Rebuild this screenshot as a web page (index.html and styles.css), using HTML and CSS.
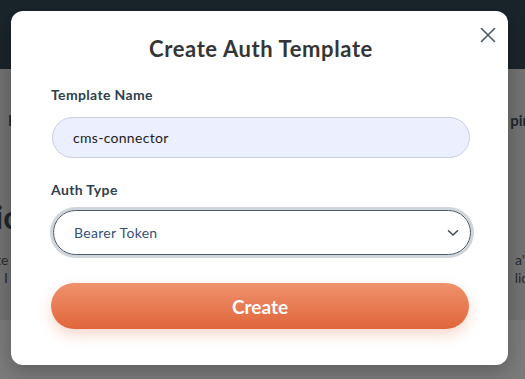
FILE: index.html
```html
<!DOCTYPE html>
<html>
<head>
<meta charset="utf-8">
<link rel="stylesheet" href="styles.css">
</head>
<body>
<div class="page">
  <header class="topbar"></header>
  <main class="content">
    <div class="row row-a"><span class="bg-strong">I</span><span class="bg-strong">pin</span></div>
    <div class="row row-h"><span class="bg-heading">ic</span><span></span></div>
    <div class="row row-p"><span>te</span><span>a"</span></div>
    <div class="row row-p2"><span>. I</span><span>lic</span></div>
  </main>
  <footer class="lower"></footer>
</div>

<div class="modal" role="dialog">
  <button class="close" aria-label="Close">
    <svg width="16" height="16" viewBox="0 0 16 16"><path d="M1.5 1.5 L14.5 14.5 M14.5 1.5 L1.5 14.5" stroke="#4b5a66" stroke-width="1.6" stroke-linecap="round" fill="none"/></svg>
  </button>
  <h2 class="title">Create Auth Template</h2>
  <label class="label">Template Name</label>
  <div class="input">cms-connector</div>
  <label class="label label-2">Auth Type</label>
  <div class="select">
    <span>Bearer Token</span>
    <svg width="12" height="8" viewBox="0 0 12 8"><path d="M1.5 1.8 L6 6 L10.5 1.8" stroke="#3e4a55" stroke-width="1.5" fill="none" stroke-linecap="round" stroke-linejoin="round"/></svg>
  </div>
  <button class="create">Create</button>
</div>
</body>
</html>
```
FILE: styles.css
```css
* { box-sizing: border-box; }
html, body { margin: 0; padding: 0; }
body {
  width: 525px; height: 379px; overflow: hidden;
  font-family: "Lato", "Noto Sans", sans-serif;
  background: #7b7b7b;
  position: relative;
}
.page { display: flex; flex-direction: column; height: 379px; }
.topbar { height: 69px; background: #1a242b; }
.content {
  height: 251px; background: #727272;
  display: flex; flex-direction: column;
  color: #1f262c;
}
.row { display: flex; justify-content: space-between; }
.row-a { margin-top: 42px; font-size: 15px; font-weight: 700; line-height: 18px; padding: 0 0 0 8px; margin-right: -6px; }
.row-h { margin-top: 70px; font-size: 32px; font-weight: 700; line-height: 36px; margin-left: -5px; }
.row-p { margin-top: 16px; font-size: 14px; line-height: 18px; color: #2a2a2a; margin-left: -4px; margin-right: -2px; }
.row-p2 { font-size: 14px; line-height: 18px; color: #2a2a2a; margin-left: -3px; margin-right: -3px; }
.lower { flex: 1; background: #7b7b7b; }

.modal {
  position: absolute; left: 11px; top: 11px;
  width: 497px; height: 354px;
  background: #fff; border-radius: 12px;
  box-shadow: 0 6px 20px rgba(0,0,0,0.25);
  padding: 26px 37px 0 40px;
  display: flex; flex-direction: column;
}
.close {
  position: absolute; right: 11px; top: 15px;
  width: 18px; height: 18px; padding: 0; border: 0; background: none;
  display: flex; align-items: center; justify-content: center;
}
.title {
  margin: 0; text-align: center;
  font-size: 22px; line-height: 24px; font-weight: 700;
  color: #353535; letter-spacing: 0.6px;
  padding-left: 0;
}
.label {
  margin-top: 25px;
  font-size: 14px; line-height: 18px; font-weight: 700;
  color: #2f3f4e; letter-spacing: 0.35px;
}
.label-2 { margin-top: 23px; }
.input {
  margin-top: 13px; margin-left: 1px; margin-right: 1px;
  height: 41px; border-radius: 21px;
  background: #eceffd; border: 1px solid #c9cfe2;
  padding: 0 20px; display: flex; align-items: center;
  font-size: 14px; color: #1d1d1d; letter-spacing: 0.3px;
}
.select {
  margin-top: 11px;
  height: 45px; border-radius: 23px;
  border: 1px solid #4e5c6a;
  box-shadow: 0 0 0 3px #cfd5da;
  margin-left: 2px; margin-right: 0;
  padding: 0 11px 0 20px;
  display: flex; align-items: center; justify-content: space-between;
  font-size: 14px; color: #35507a; letter-spacing: 0.3px;
}
.create {
  margin-top: 28px;
  height: 46px; border-radius: 23px; border: 0;
  background: linear-gradient(#ef926d, #e0653a);
  box-shadow: 0 6px 14px rgba(226, 110, 70, 0.28);
  color: #fff; font-family: inherit;
  font-size: 19px; font-weight: 700;
  margin-right: 2px;
}
```
